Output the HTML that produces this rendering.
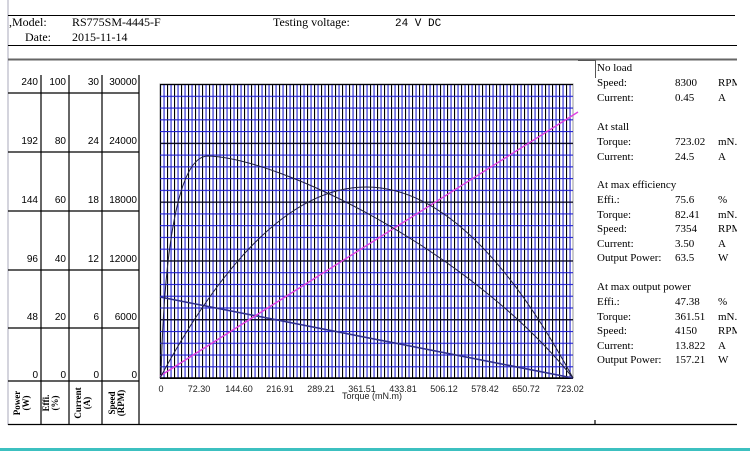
<!DOCTYPE html>
<html><head><meta charset="utf-8"><style>
body{margin:0;width:750px;height:451px;background:#fff;overflow:hidden;position:relative;font-family:"Liberation Serif",serif;}
</style></head><body>
<svg width="750" height="451" style="position:absolute;left:0;top:0" font-family="Liberation Serif, serif">
<defs>
<pattern id="vg" x="160" y="0" width="7" height="10" patternUnits="userSpaceOnUse">
<rect x="0" y="0" width="1.1" height="10" fill="#000"/>
<rect x="3.5" y="0" width="1.1" height="10" fill="#2020d0"/>
</pattern>
<pattern id="hg" x="0" y="84" width="10" height="11.76" patternUnits="userSpaceOnUse">
<rect x="0" y="0" width="10" height="1.1" fill="#2020d0"/>
</pattern>
<pattern id="hk" x="0" y="84" width="10" height="58.8" patternUnits="userSpaceOnUse">
<rect x="0" y="0" width="10" height="1.1" fill="#000"/>
</pattern>
</defs>
<line x1="8" y1="0" x2="8" y2="425" stroke="#aab" stroke-width="1"/>
<line x1="8" y1="15.5" x2="735" y2="15.5" stroke="#000"/>
<line x1="8" y1="45.5" x2="737" y2="45.5" stroke="#000"/>
<line x1="8" y1="59.5" x2="737" y2="59.5" stroke="#666" stroke-width="2"/>
<text x="9" y="26" font-size="12">,Model:</text>
<text x="72" y="26" font-size="12">RS775SM-4445-F</text>
<text x="25" y="41" font-size="12">Date:</text>
<text x="72" y="41" font-size="12">2015-11-14</text>
<text x="273" y="26" font-size="12">Testing voltage:</text>
<text x="395" y="26" font-size="11" font-family="Liberation Mono, monospace">24 V DC</text>
<g stroke="#000" stroke-width="1.2">
<line x1="41" y1="75" x2="41" y2="424"/><line x1="69" y1="75" x2="69" y2="424"/>
<line x1="102" y1="75" x2="102" y2="424"/><line x1="139" y1="75" x2="139" y2="424"/>
<line x1="8" y1="93" x2="139" y2="93"/><line x1="8" y1="152" x2="139" y2="152"/>
<line x1="8" y1="211" x2="139" y2="211"/><line x1="8" y1="270" x2="139" y2="270"/>
<line x1="8" y1="328" x2="139" y2="328"/><line x1="8" y1="381" x2="139" y2="381"/>
<line x1="8" y1="424.5" x2="737" y2="424.5"/>
<line x1="595" y1="420" x2="595" y2="424"/>
</g>
<g font-family="Liberation Sans, sans-serif" font-size="10" text-anchor="end">
<text x="38" y="85">240</text><text x="66" y="85">100</text><text x="99" y="85">30</text><text x="137" y="85">30000</text>
<text x="38" y="144">192</text><text x="66" y="144">80</text><text x="99" y="144">24</text><text x="137" y="144">24000</text>
<text x="38" y="203">144</text><text x="66" y="203">60</text><text x="99" y="203">18</text><text x="137" y="203">18000</text>
<text x="38" y="262">96</text><text x="66" y="262">40</text><text x="99" y="262">12</text><text x="137" y="262">12000</text>
<text x="38" y="320">48</text><text x="66" y="320">20</text><text x="99" y="320">6</text><text x="137" y="320">6000</text>
<text x="38" y="378">0</text><text x="66" y="378">0</text><text x="99" y="378">0</text><text x="137" y="378">0</text>
</g>
<g font-size="9" font-weight="bold" text-anchor="middle">
<text transform="translate(20,403) rotate(-90)">Power</text><text transform="translate(29,403) rotate(-90)">(W)</text>
<text transform="translate(49,403) rotate(-90)">Effi.</text><text transform="translate(58,403) rotate(-90)">(%)</text>
<text transform="translate(81,403) rotate(-90)">Current</text><text transform="translate(90,403) rotate(-90)">(A)</text>
<text transform="translate(115,403) rotate(-90)">Speed</text><text transform="translate(124,403) rotate(-90)">(RPM)</text>
</g>
<rect x="160" y="84" width="413" height="294" fill="#fff" stroke="#999"/>
<rect x="160" y="84" width="413" height="294" fill="url(#vg)"/>
<rect x="160" y="84" width="413" height="294" fill="url(#hg)"/>
<rect x="160" y="84" width="413" height="295" fill="url(#hk)"/>
<line x1="160" y1="378" x2="573" y2="378" stroke="#000" stroke-width="1.5"/>
<line x1="160" y1="297" x2="573" y2="378" stroke="#303090" stroke-width="1.6"/>
<line x1="160" y1="376" x2="578" y2="112" stroke="#e040e0" stroke-width="1.4"/>
<path d="M160,378 Q366,-4 573,378" fill="none" stroke="#202040" stroke-width="1"/>
<path d="M161,378 C164,250 178,156 208,156 C280,158 470,250 573,378" fill="none" stroke="#202040" stroke-width="1"/>
<g font-family="Liberation Sans, sans-serif" font-size="9" text-anchor="middle" fill="#222">
<text x="161" y="392">0</text><text x="199" y="392">72.30</text><text x="239" y="392">144.60</text>
<text x="280" y="392">216.91</text><text x="321" y="392">289.21</text><text x="362" y="392">361.51</text>
<text x="403" y="392">433.81</text><text x="444" y="392">506.12</text><text x="485" y="392">578.42</text>
<text x="526" y="392">650.72</text><text x="570" y="392">723.02</text>
<text x="372" y="399">Torque (mN.m)</text>
</g>
<polyline points="578,60.5 595.5,60.5 595.5,78" fill="none" stroke="#555"/>
<g font-size="11">
<text x="597" y="71">No load</text>
<text x="597" y="86">Speed:</text><text x="675" y="86">8300</text><text x="718" y="86">RPM</text>
<text x="597" y="101">Current:</text><text x="675" y="101">0.45</text><text x="718" y="101">A</text>
<text x="597" y="130">At stall</text>
<text x="597" y="145">Torque:</text><text x="675" y="145">723.02</text><text x="718" y="145">mN.</text>
<text x="597" y="160">Current:</text><text x="675" y="160">24.5</text><text x="718" y="160">A</text>
<text x="597" y="188">At max efficiency</text>
<text x="597" y="203">Effi.:</text><text x="675" y="203">75.6</text><text x="718" y="203">%</text>
<text x="597" y="218">Torque:</text><text x="675" y="218">82.41</text><text x="718" y="218">mN.</text>
<text x="597" y="232">Speed:</text><text x="675" y="232">7354</text><text x="718" y="232">RPM</text>
<text x="597" y="247">Current:</text><text x="675" y="247">3.50</text><text x="718" y="247">A</text>
<text x="597" y="261">Output Power:</text><text x="675" y="261">63.5</text><text x="718" y="261">W</text>
<text x="597" y="290">At max output power</text>
<text x="597" y="305">Effi.:</text><text x="675" y="305">47.38</text><text x="718" y="305">%</text>
<text x="597" y="320">Torque:</text><text x="675" y="320">361.51</text><text x="718" y="320">mN.</text>
<text x="597" y="334">Speed:</text><text x="675" y="334">4150</text><text x="718" y="334">RPM</text>
<text x="597" y="349">Current:</text><text x="675" y="349">13.822</text><text x="718" y="349">A</text>
<text x="597" y="363">Output Power:</text><text x="675" y="363">157.21</text><text x="718" y="363">W</text>
</g>
<rect x="737" y="62" width="13" height="320" fill="#fff"/>
<rect x="0" y="448" width="750" height="3" fill="#3cc0c0"/>
</svg>
</body></html>
